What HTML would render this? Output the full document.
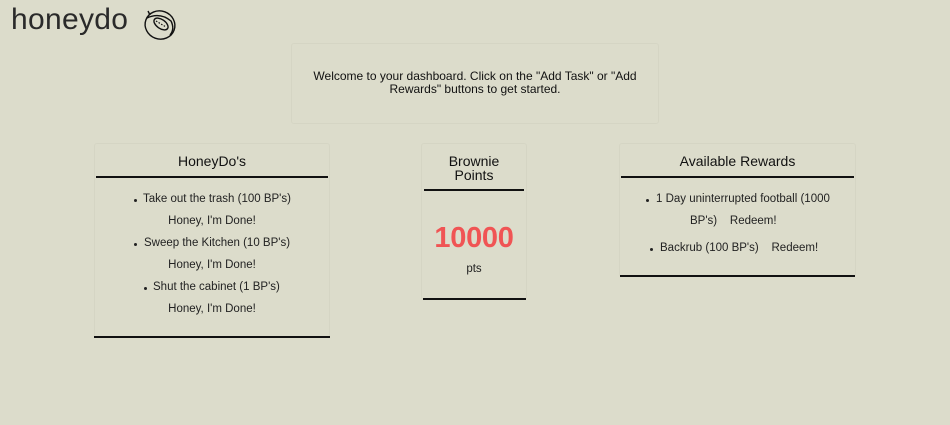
<!DOCTYPE html>
<html><head><style>
body{margin:0;width:950px;height:425px;background:#dcdccb;font-family:"Liberation Sans",Arial,sans-serif;color:#111;position:relative;overflow:hidden}
.abs{position:absolute}
.box{position:absolute;border:1px solid #d5d5c4;border-radius:3px;box-sizing:border-box}
.line{position:absolute;height:2px;background:#111}
.t{position:absolute;text-align:center;white-space:nowrap}
.s{font-size:11.5px;color:#222}
.h{font-size:14px;color:#111}
.dot{position:absolute;width:3px;height:3px;border-radius:50%;background:#222}
</style></head><body>
<div class="abs" style="left:11px;top:3px;font-size:30px;color:#2a2a2a;letter-spacing:0.3px">honeydo</div>
<svg class="abs" style="left:142px;top:7px" width="36" height="36" viewBox="0 0 36 36" fill="none" stroke="#111" stroke-width="1.4">
<ellipse cx="18" cy="18" rx="15" ry="14" transform="rotate(20 18 18)"/>
<path d="M5 11 Q18 5 29 14 Q33 22 28 28"/>
<ellipse cx="19" cy="17" rx="4.5" ry="8" transform="rotate(-55 19 17)"/>
<path d="M14 14 L24 20" stroke-dasharray="1.5 1.5" stroke-width="1.2"/>
<path d="M6 4 L8 8"/>
</svg>
<div class="box" style="left:291px;top:43px;width:368px;height:81px"></div>
<div class="t" style="left:291px;width:368px;top:70px;font-size:12px;line-height:13px;white-space:normal;padding:0 18px;box-sizing:border-box">Welcome to your dashboard. Click on the "Add Task" or "Add Rewards" buttons to get started.</div>

<div class="box" style="left:94px;top:143px;width:236px;height:195px"></div>
<div class="t h" style="left:94px;width:236px;top:153px">HoneyDo's</div>
<div class="line" style="left:96px;width:232px;top:176px"></div>
<div class="dot" style="left:134px;top:199px"></div><div class="t s" style="left:143px;top:193px">Take out the trash (100 BP's)</div>
<div class="t s" style="left:94px;width:236px;top:215px">Honey, I'm Done!</div>
<div class="dot" style="left:134px;top:243px"></div><div class="t s" style="left:144px;top:237px">Sweep the Kitchen (10 BP's)</div>
<div class="t s" style="left:94px;width:236px;top:259px">Honey, I'm Done!</div>
<div class="dot" style="left:144px;top:287px"></div><div class="t s" style="left:153px;top:281px">Shut the cabinet (1 BP's)</div>
<div class="t s" style="left:94px;width:236px;top:303px">Honey, I'm Done!</div>
<div class="line" style="left:94px;width:236px;top:336px"></div>

<div class="box" style="left:421px;top:143px;width:106px;height:157px"></div>
<div class="t h" style="left:421px;width:106px;top:154px;line-height:14px">Brownie<br>Points</div>
<div class="line" style="left:424px;width:100px;top:189px"></div>
<div class="t" style="left:421px;width:106px;top:222px;font-size:29px;font-weight:bold;color:#f05454;letter-spacing:-0.3px">10000</div>
<div class="t s" style="left:421px;width:106px;top:263px">pts</div>
<div class="line" style="left:423px;width:103px;top:298px"></div>

<div class="box" style="left:619px;top:143px;width:237px;height:134px"></div>
<div class="t h" style="left:619px;width:237px;top:153px">Available Rewards</div>
<div class="line" style="left:621px;width:233px;top:176px"></div>
<div class="dot" style="left:646px;top:199px"></div><div class="t s" style="left:656px;top:193px">1 Day uninterrupted football (1000</div>
<div class="t s" style="left:690px;top:215px">BP's)&nbsp;&nbsp;&nbsp;&nbsp;Redeem!</div>
<div class="dot" style="left:650px;top:248px"></div><div class="t s" style="left:660px;top:242px">Backrub (100 BP's)&nbsp;&nbsp;&nbsp;&nbsp;Redeem!</div>
<div class="line" style="left:620px;width:235px;top:275px"></div>
</body></html>
